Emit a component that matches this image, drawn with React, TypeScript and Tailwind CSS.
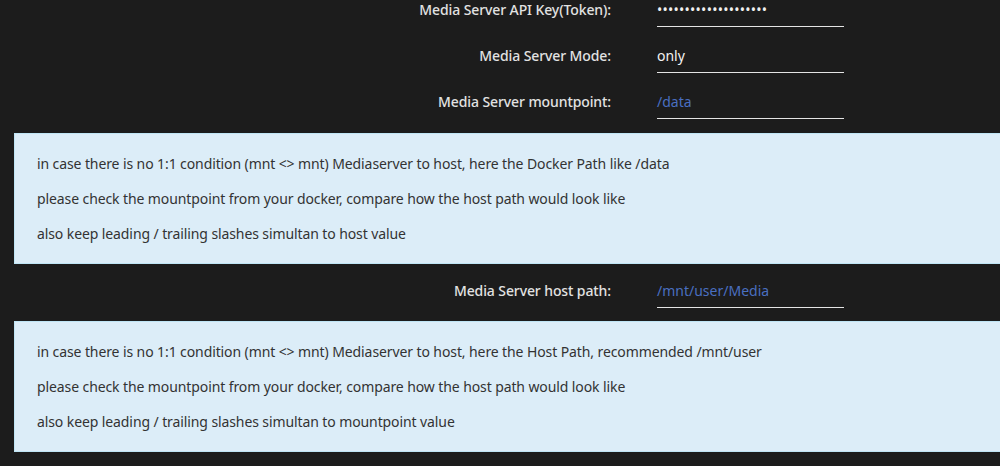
export default function App() {
  const rows1 = [
    { label: "Media Server API Key(Token):", value: "••••••••••••••••••••", kind: "secret" },
    { label: "Media Server Mode:", value: "only", kind: "text" },
    { label: "Media Server mountpoint:", value: "/data", kind: "path" },
  ]

  return (
    <div className="min-h-[466px] w-[1000px] overflow-hidden bg-[#1c1c1c] font-['Noto_Sans',sans-serif]">
      <div className="-mt-[7px] flex flex-col gap-[12px]">
        {rows1.map((r) => (
          <Row key={r.label} label={r.label} value={r.value} kind={r.kind} />
        ))}
      </div>

      <InfoBox
        className="mt-[14px]"
        lines={[
          "in case there is no 1:1 condition (mnt <> mnt) Mediaserver to host, here the Docker Path like /data",
          "please check the mountpoint from your docker, compare how the host path would look like",
          "also keep leading / trailing slashes simultan to host value",
        ]}
      />

      <div className="mt-[10px]">
        <Row label="Media Server host path:" value="/mnt/user/Media" kind="path" />
      </div>

      <InfoBox
        className="mt-[13px]"
        lines={[
          "in case there is no 1:1 condition (mnt <> mnt) Mediaserver to host, here the Host Path, recommended /mnt/user",
          "please check the mountpoint from your docker, compare how the host path would look like",
          "also keep leading / trailing slashes simultan to mountpoint value",
        ]}
      />
    </div>
  )
}

function Row({ label, value, kind }: { label: string; value: string; kind: string }) {
  return (
    <div className="flex items-start">
      <div className="w-[611px] text-right text-[14px] font-medium tracking-[-0.1px] leading-[33px] text-[#e2e2e2]">
        {label}
      </div>
      <div
        className={
          "ml-[46px] h-[34px] w-[187px] border-b border-[#e4e4e4] leading-[33px] " +
          (kind === "path"
            ? "text-[14px] text-[#4a6fc0]"
            : kind === "secret"
              ? "text-[14px] tracking-[0.25px] text-[#f0f0f0]"
              : "text-[14px] text-[#f2f2f2]")
        }
      >
        {value}
      </div>
    </div>
  )
}

function InfoBox({ lines, className }: { lines: string[]; className?: string }) {
  return (
    <div
      className={
        "ml-[14px] -mr-[20px] border border-[#bfe5f5] bg-[#dcedf8] py-3 pl-[22px] text-[14px] tracking-[-0.1px] leading-[35px] text-[#333333] " +
        (className ?? "")
      }
    >
      {lines.map((l) => (
        <div key={l}>{l}</div>
      ))}
    </div>
  )
}
